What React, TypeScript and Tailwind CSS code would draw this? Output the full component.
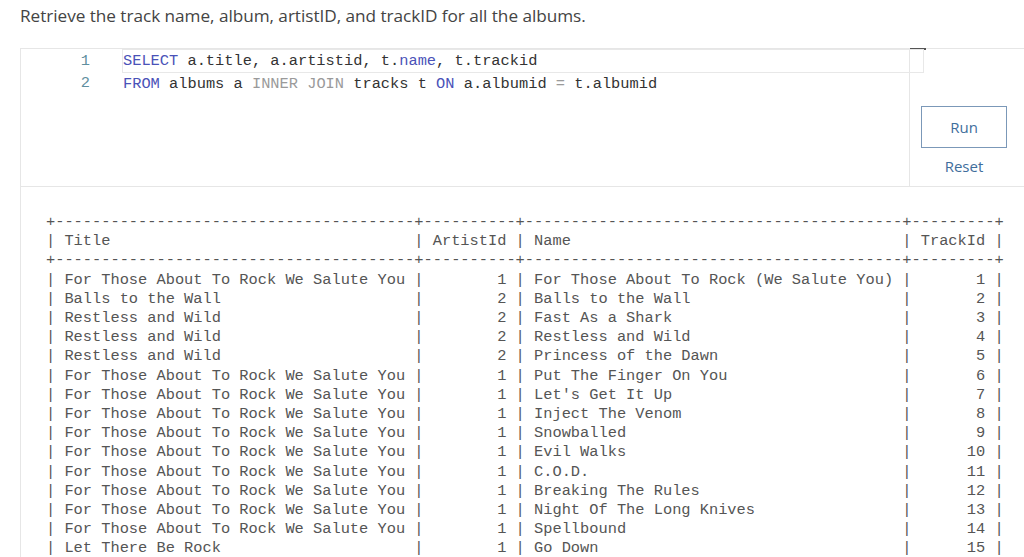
const albums = [
  ["For Those About To Rock We Salute You", 1, "For Those About To Rock (We Salute You)", 1],
  ["Balls to the Wall", 2, "Balls to the Wall", 2],
  ["Restless and Wild", 2, "Fast As a Shark", 3],
  ["Restless and Wild", 2, "Restless and Wild", 4],
  ["Restless and Wild", 2, "Princess of the Dawn", 5],
  ["For Those About To Rock We Salute You", 1, "Put The Finger On You", 6],
  ["For Those About To Rock We Salute You", 1, "Let's Get It Up", 7],
  ["For Those About To Rock We Salute You", 1, "Inject The Venom", 8],
  ["For Those About To Rock We Salute You", 1, "Snowballed", 9],
  ["For Those About To Rock We Salute You", 1, "Evil Walks", 10],
  ["For Those About To Rock We Salute You", 1, "C.O.D.", 11],
  ["For Those About To Rock We Salute You", 1, "Breaking The Rules", 12],
  ["For Those About To Rock We Salute You", 1, "Night Of The Long Knives", 13],
  ["For Those About To Rock We Salute You", 1, "Spellbound", 14],
  ["Let There Be Rock", 1, "Go Down", 15],
] as const;

const widths = [37, 8, 39, 7];

const divider = "+" + widths.map((w) => "-".repeat(w + 2)).join("+") + "+";

const row = (cells: string[], right: boolean[]) =>
  "| " +
  cells
    .map((c, i) => (right[i] ? c.padStart(widths[i]) : c.padEnd(widths[i])))
    .join(" | ") +
  " |";

const tableText = [
  divider,
  row(["Title", "ArtistId", "Name", "TrackId"], [false, false, false, false]),
  divider,
  ...albums.map((a) =>
    row([a[0], String(a[1]), a[2], String(a[3])], [false, true, false, true]),
  ),
].join("\n");

const mono = "font-['Liberation_Mono',monospace]";

export default function App() {
  return (
    <div className="h-screen overflow-hidden bg-white pl-5 font-['Open_Sans',sans-serif] text-[#444]">
      <p className="pt-[4px] text-[17.2px] leading-[24px] tracking-[-0.04px]">
        Retrieve the track name, album, artistID, and trackID for all the albums.
      </p>

      <div className="mt-[20px] border-l border-t border-[#e6e6e6]">
        <div className="flex h-[138px] border-b border-[#e6e6e6]">
          <div className={`flex min-w-0 flex-1 pt-px text-[15.35px] leading-[22px] ${mono}`}>
            <div className="w-[101px] shrink-0 pr-[32px] text-right text-[#5f8f9f]">
              <div>1</div>
              <div>2</div>
            </div>
            <div className="min-w-0 flex-1 text-[#333]">
              <div className="relative z-10 -mt-px w-[802px] border border-[#e8e8e8] whitespace-pre">
                <span className="text-[#4a52b8]">SELECT</span> a.title, a.artistid, t.
                <span className="text-[#4a52b8]">name</span>, t.trackid
              </div>
              <div className="pl-px whitespace-pre">
                <span className="text-[#4a52b8]">FROM</span> albums a{" "}
                <span className="text-[#9a9a9a]">INNER JOIN</span> tracks t{" "}
                <span className="text-[#4a52b8]">ON</span> a.albumid{" "}
                <span className="text-[#9a9a9a]">=</span> t.albumid
              </div>
            </div>
          </div>

          <div className="relative w-[115px] shrink-0 border-l border-[#e6e6e6] pl-[11px] pt-[57px]">
            <div className="absolute -top-px left-0 h-[2px] w-4 bg-[#555]" />
            <button
              type="button"
              className="flex h-[42px] w-[86px] items-center justify-center border border-[#7b98b8] text-[15px] text-[#3f6e9c]"
            >
              Run
            </button>
            <div className="mt-[8px] w-[86px] text-center text-[15px] leading-5 text-[#3f6e9c]">
              Reset
            </div>
          </div>
        </div>

        <pre
          className={`pl-[25px] pt-[26px] text-[15.35px] leading-[19.2px] text-[#555] ${mono}`}
        >
          {tableText}
        </pre>
      </div>
    </div>
  );
}
